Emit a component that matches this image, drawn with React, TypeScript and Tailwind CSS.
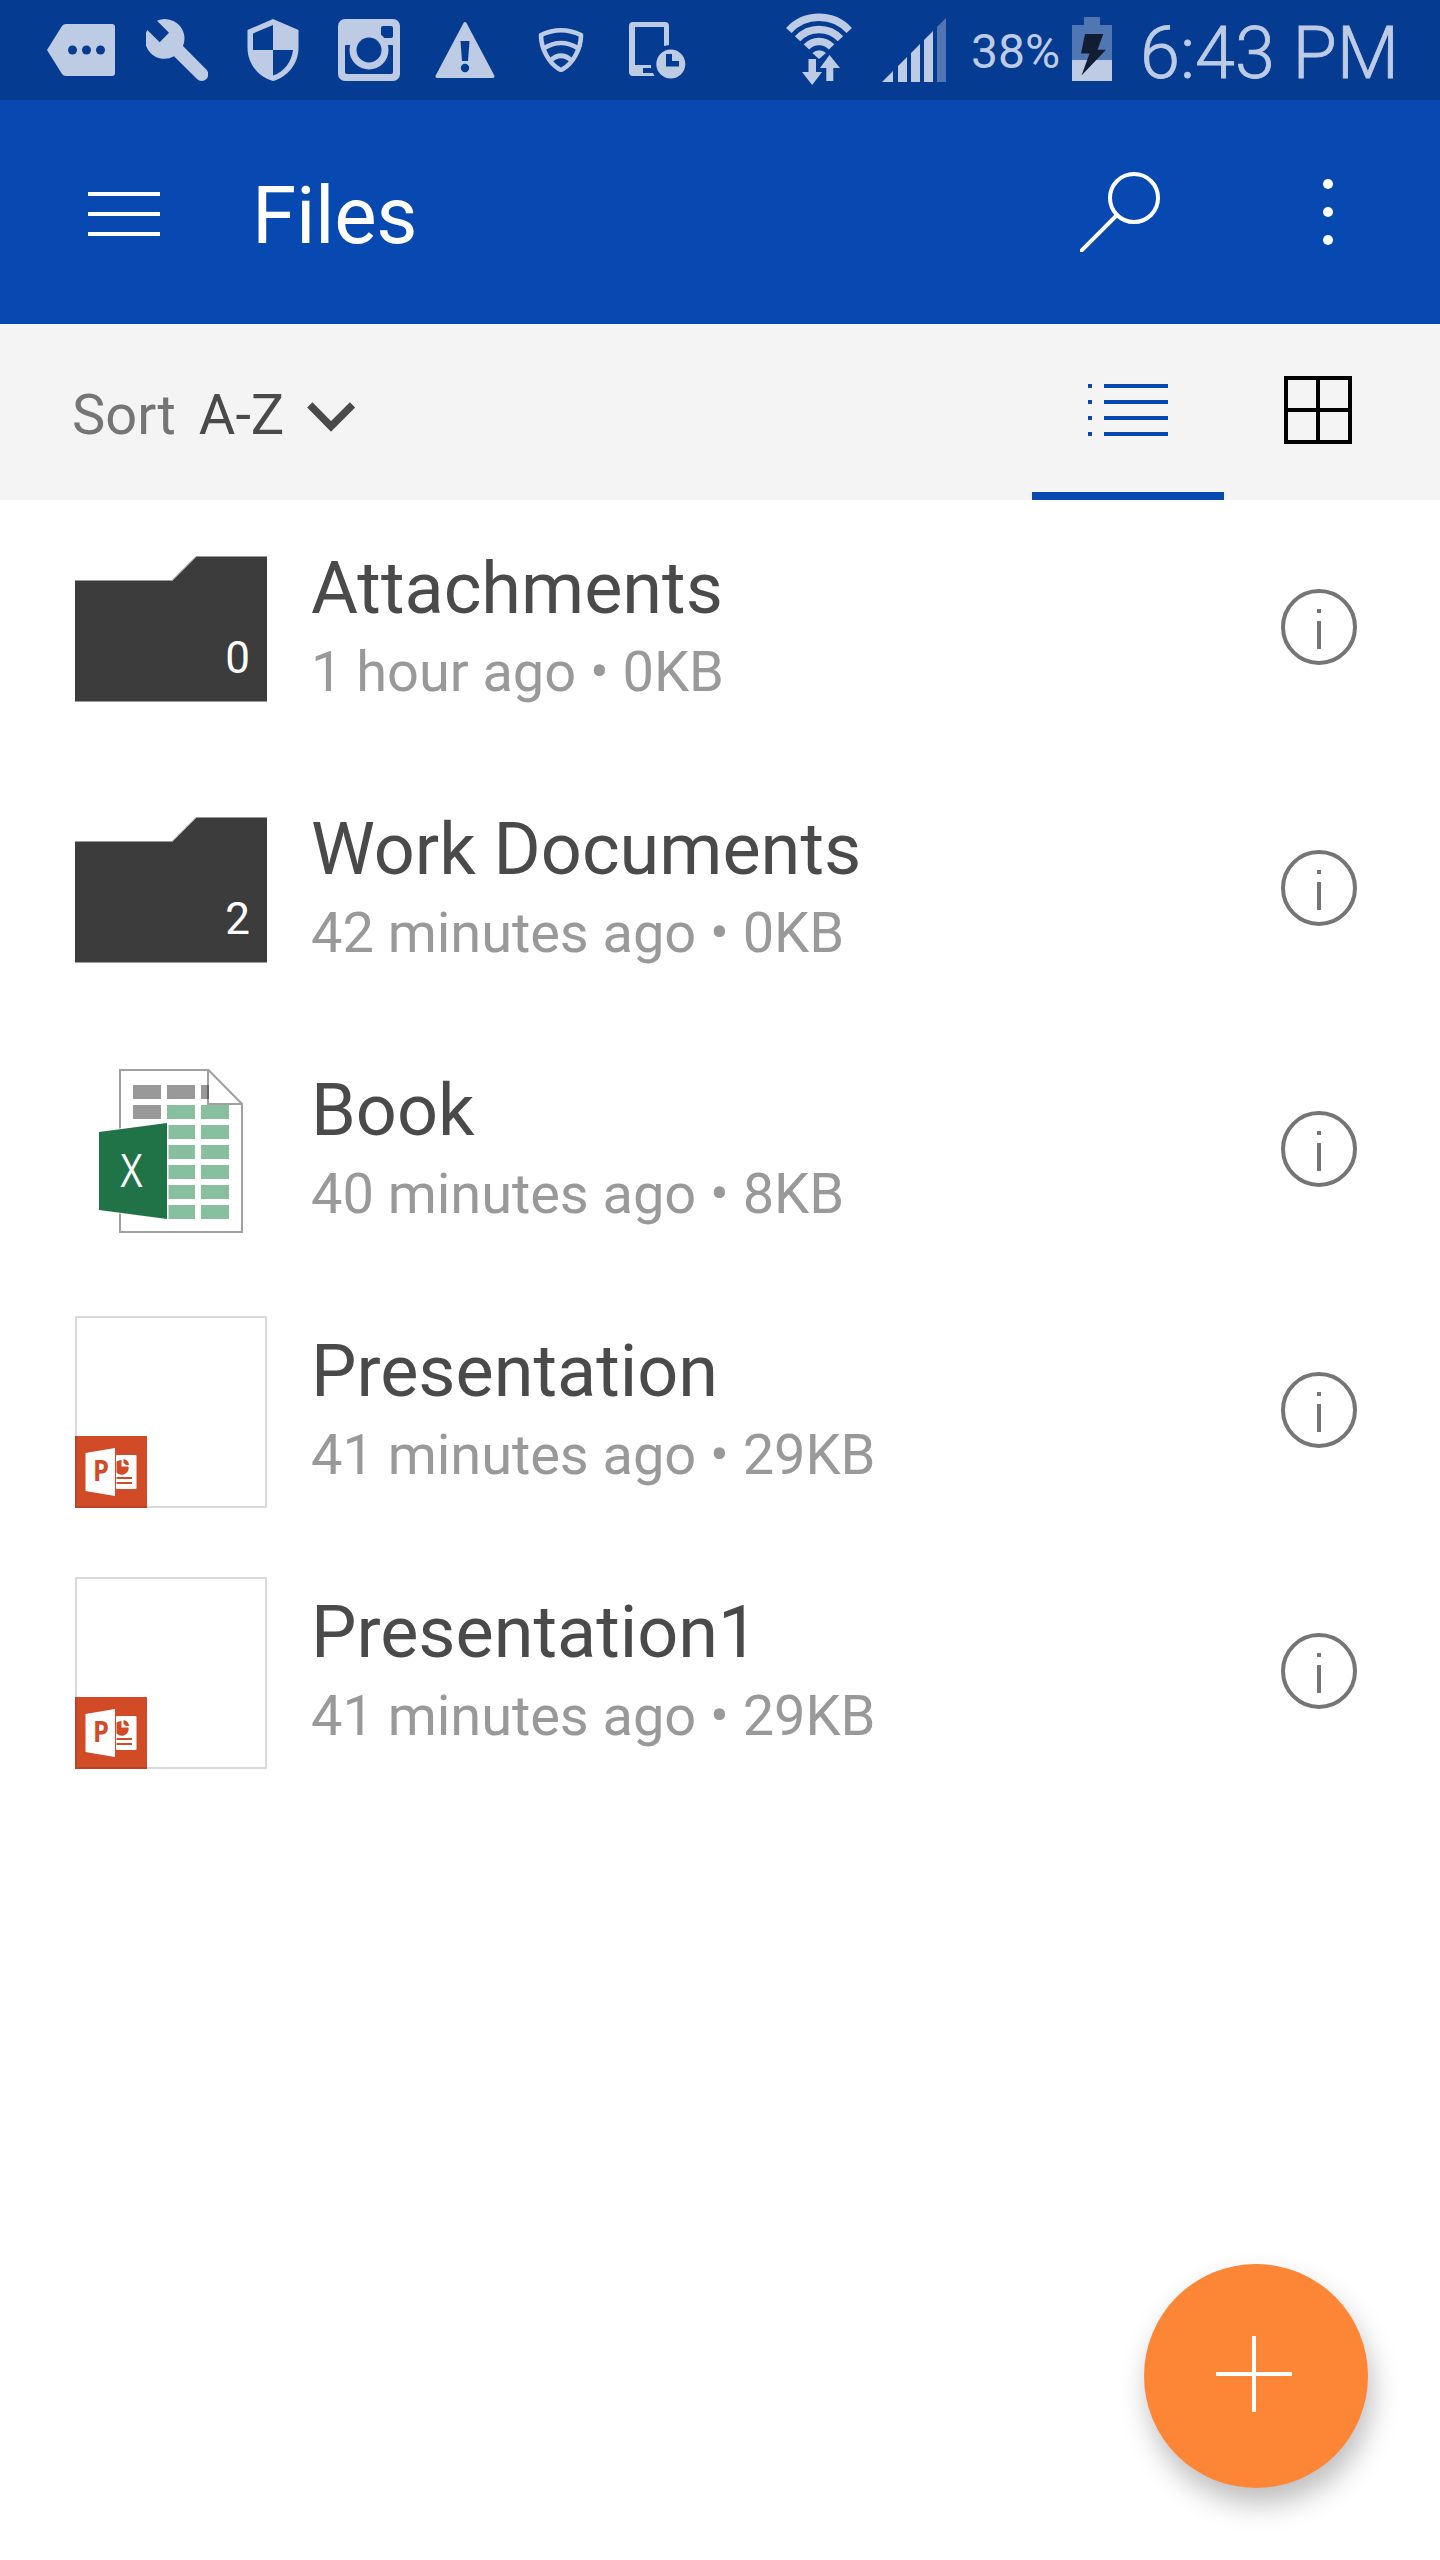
import React from "react";

const LIGHT = "#bdcbe4";
const DIM = "#5176b4";
const STATUS = "#053c91";

function StatusBar() {
  return (
    <div className="flex h-[100px] w-full shrink-0 bg-[#053c91] text-[#bdcbe4]">
      <svg className="ml-[47px] h-[100px] w-[68px] shrink-0" viewBox="47 0 68 100">
        <path d="M47 50 L62 26 Q63.500 24 66 24 H112 Q115 24 115 27 V73 Q115 76 112 76 H66 Q63.500 76 62 74 Z" fill={LIGHT} />
        <circle cx="72.500" cy="50" r="4.500" fill={STATUS} />
        <circle cx="86.500" cy="50" r="4.500" fill={STATUS} />
        <circle cx="100.500" cy="50" r="4.500" fill={STATUS} />
      </svg>
      <svg className="ml-[31px] h-[100px] w-[62px] shrink-0" viewBox="146 0 62 100">
        <path d="M157 20.800 A19.500 19.500 0 0 1 183 46 L206.300 69.500 A6.500 6.500 0 0 1 197 79 L174 56.300 A19.500 19.500 0 0 1 147.300 30 L159.700 42.300 L169 32.800 Z" fill={LIGHT} />
      </svg>
      <svg className="ml-[39px] h-[100px] w-[52px] shrink-0" viewBox="247 0 52 100">
        <path d="M273 19 L298.500 30 V48 C298.500 63 288 77 273 81 C258 77 247.500 63 247.500 48 V30 Z" fill={LIGHT} />
        <path d="M253 33.500 L273 25 V50 H253 Z M273 50 H293 C291.500 62 284 72 273 75.500 Z" fill={STATUS} />
      </svg>
      <svg className="ml-[39px] h-[100px] w-[62px] shrink-0" viewBox="338 0 62 100">
        <rect x="338" y="19" width="62" height="62" rx="7" fill={LIGHT} />
        <rect x="381" y="26" width="12" height="12" rx="2" fill={STATUS} />
        <path d="M345 46 Q345 45 346 45 H392 Q393 45 393 46 V72 Q393 74 391 74 H347 Q345 74 345 72 Z" fill={STATUS} />
        <circle cx="369" cy="50" r="19.500" fill={LIGHT} />
        <circle cx="369" cy="50" r="12.500" fill={STATUS} />
      </svg>
      <svg className="ml-[35px] h-[100px] w-[60px] shrink-0" viewBox="435 0 60 100">
        <path d="M463.500 23 Q465 21 466.500 23 L494.300 75.500 Q495 78 492.500 78 H437.500 Q435 78 435.700 75.500 Z" fill={LIGHT} />
        <path d="M460.500 41 H469.500 L468 61 H462 Z" fill={STATUS} />
        <circle cx="465" cy="68" r="4.200" fill={STATUS} />
      </svg>
      <svg className="ml-[43px] h-[100px] w-[46px] shrink-0" viewBox="538 0 46 100" fill="none" stroke={LIGHT} strokeWidth="4.600">
        <path d="M541 35 Q561 25.500 581 35 C581 49 573 63 563 69 Q561 70.500 559 69 C549 63 541 49 541 35 Z" strokeLinejoin="round" />
        <path d="M543.500 48.500 Q561 37.500 578.500 48.500" />
        <path d="M550.500 60.500 Q561 51 571.500 60.500" />
      </svg>
      <svg className="ml-[45px] h-[100px] w-[57px] shrink-0" viewBox="629 0 57 100">
        <path d="M633 22 H665 Q669 22 669 26 V45 L664 46 V27 H635 V65 H651 V68 H643 V73 H653 L654.500 76 H633 Q629 76 629 72 V26 Q629 22 633 22 Z" fill={LIGHT} />
        <circle cx="670.800" cy="64" r="14.500" fill={LIGHT} />
        <path d="M666 54 H672 V61 H679 V66.500 H666 Z" fill={STATUS} />
      </svg>
      <svg className="ml-[100px] h-[100px] w-[66px] shrink-0" viewBox="786 0 66 100">
        <g fill="none" stroke={LIGHT} strokeWidth="7.500">
          <path d="M788.800 30.500 A41.300 41.300 0 0 1 849.200 30.500" />
          <path d="M797.600 38.700 A29.300 29.300 0 0 1 840.400 38.700" />
          <path d="M806.400 46.900 A17.300 17.300 0 0 1 831.600 46.900" />
        </g>
        <path d="M819 59 L812.400 53 A9.500 9.500 0 0 1 826 53 Z" fill={LIGHT} />
        <path d="M808.500 59 H816 V72 H822 L812.200 85 L802 72 H808.500 Z M829.500 55 L840 68 H833.300 V81 H826.300 V68 H820 Z" fill={LIGHT} />
      </svg>
      <svg className="ml-[30px] h-[100px] w-[64px] shrink-0" viewBox="882 0 64 100">
        <path d="M882 82 L893 71 V82 Z M898 82 V66 L907 57 V82 Z M911 82 V53 L920 44 V82 Z M924 82 V40 L933 31 V82 Z" fill={LIGHT} />
        <path d="M937 82 V27 L946 18 V82 Z" fill={DIM} />
      </svg>
      <span className="ml-[25px] w-[90px] shrink-0 pt-[24px] text-[48px] leading-[56px] whitespace-nowrap">38%</span>
      <svg className="ml-[11px] h-[100px] w-[40px] shrink-0" viewBox="1072 0 40 100">
        <path d="M1084 17 H1100 V25 H1112 V60 H1072 V25 H1084 Z" fill={DIM} />
        <rect x="1072" y="60" width="40" height="21" fill={LIGHT} />
        <path d="M1085 34 H1103.300 L1097.500 49.700 H1106 L1081.500 75.500 L1089.500 53.500 H1081 Z" fill="#111d33" />
      </svg>
      <span className="ml-[28px] shrink-0 pt-[12px] text-[72px] leading-[84px] font-light whitespace-nowrap [-webkit-text-stroke:0.8px_#bdcbe4]">6:43 PM</span>
    </div>
  );
}

function Header() {
  return (
    <header className="flex h-[224px] w-full shrink-0 items-start bg-[#0849b1] text-white">
      <button className="mt-[92px] ml-[88px] flex w-[72px] flex-col gap-4">
        <span className="h-1 w-full bg-white" />
        <span className="h-1 w-full bg-white" />
        <span className="h-1 w-full bg-white" />
      </button>
      <h1 className="mt-[69px] ml-[92px] grow text-[80px] leading-[94px] tracking-[-0.3px]">Files</h1>
      <svg className="mt-[72px] h-[80px] w-[80px]" viewBox="1080 172 80 80" fill="none" stroke="white" strokeWidth="4">
        <circle cx="1134" cy="198" r="24" />
        <path d="M1117 215 L1081.700 250.300" strokeLinecap="round" />
      </svg>
      <div className="mt-[79px] mr-[107px] ml-[163px] flex flex-col gap-[18px]">
        <span className="size-[10px] rounded-full bg-white" />
        <span className="size-[10px] rounded-full bg-white" />
        <span className="size-[10px] rounded-full bg-white" />
      </div>
    </header>
  );
}

function Toolbar() {
  return (
    <div className="flex h-[176px] w-full shrink-0 items-start bg-[#f4f4f4] text-[56px] leading-[66px]">
      <span className="mt-[58px] ml-[72px] text-[#757575]">Sort</span>
      <span className="mt-[58px] ml-[23px] text-[#4a4a4a]">A-Z</span>
      <svg className="mt-[76px] ml-[22px] h-[34px] w-[50px]" viewBox="306 400 50 34">
        <path d="M309.800 404.800 L331 426.400 L352.500 404.800" fill="none" stroke="#4a4a4a" strokeWidth="7.400" />
      </svg>
      <div className="mr-6 ml-auto flex h-full">
        <button className="flex h-full w-[192px] flex-col justify-between border-b-8 border-[#0849b1] pt-[60px]">
          <svg className="ml-14 h-[52px] w-20" viewBox="0 0 80 52" fill="#0849b1">
            {[0, 16, 32, 48].map((y) => (
              <g key={y}>
                <rect x="0" y={y} width="4" height="4" />
                <rect x="16" y={y} width="64" height="4" />
              </g>
            ))}
          </svg>
        </button>
        <button className="flex h-full w-[192px] pt-[52px] pl-[60px]">
          <svg className="size-[68px]" viewBox="0 0 68 68" fill="none" stroke="black" strokeWidth="4">
            <path d="M2 2 H66 V66 H2 Z M34 2 V66 M2 34 H66" />
          </svg>
        </button>
      </div>
    </div>
  );
}

function FolderThumb({ count }: { count: number }) {
  return (
    <div className="relative size-[192px]">
      <svg className="size-[192px]" viewBox="0 0 192 192">
        <path d="M0 48 H97 L121 24 H192 V168 H0 Z" fill="#3c3c3c" />
        <path d="M0 47.500 H97 L121 23.500 H192 M0 168.500 H192" fill="none" stroke="#9b9b9b" strokeWidth="1" />
      </svg>
      <span className="absolute right-[17px] bottom-[41px] text-[44px] leading-[52px] text-white">{count}</span>
    </div>
  );
}

function ExcelThumb() {
  const rows = [30, 50, 70, 90, 110, 130, 150];
  return (
    <svg className="size-[192px]" viewBox="0 0 192 192">
      <path d="M45 15 H133.500 L167 49 V177 H45 Z" fill="white" stroke="#a0a0a0" strokeWidth="2" />
      {rows.map((y, i) => (
        <g key={y}>
          {i < 2 && <rect x="58" y={y} width="28" height="14" fill="#999999" />}
          <rect x="92" y={y} width="28" height="14" fill={i === 0 ? "#999999" : "#87bf9f"} />
          <rect x="126" y={y} width={i === 0 ? 8 : 28} height="14" fill={i === 0 ? "#999999" : "#87bf9f"} />
        </g>
      ))}
      <path d="M133 15 V49 H167" fill="none" stroke="#a0a0a0" strokeWidth="2" />
      <rect x="132" y="30" width="2" height="14" fill="#666666" />
      <path d="M24 76 L93.500 67.500 V164.500 L24 156 Z" fill="white" />
      <path d="M24 77 L92 68 V164 L24 155 Z" fill="#207347" />
      <text x="45.500" y="132" fontSize="45.500" textLength="22" lengthAdjust="spacingAndGlyphs" fill="white" fontFamily="Open Sans, sans-serif">X</text>
    </svg>
  );
}

function PowerPointThumb() {
  return (
    <div className="flex size-[192px] items-end border-2 border-[#d9d9d9]">
      <svg className="-mb-0.5 -ml-0.5 size-[72px]" viewBox="0 0 72 72">
        <rect width="72" height="72" fill="#d04b26" />
        <path d="M0 0 H2 V70 H72 V72 H0 Z" fill="#b84423" />
        <rect x="41" y="19" width="20.500" height="34" rx="1" fill="white" />
        <path d="M10.500 17 L40 12 V60 L10.500 55 Z" fill="white" />
        <path d="M41.500 25.500 Q43.500 24 46.500 24 V30.500 H53.500 A7 7 0 0 1 41.500 36.500 Z M48.500 23 A6.500 6.500 0 0 1 54 29 H51 L48.500 27 Z M41.500 41 H57 V43 H41.500 Z M41.500 46 H57 V48 H41.500 Z" fill="#d04b26" />
        <text x="18" y="45" fontSize="28" fontWeight="700" textLength="16" lengthAdjust="spacingAndGlyphs" fill="#d04b26" fontFamily="Open Sans, sans-serif">P</text>
      </svg>
    </div>
  );
}

function InfoIcon() {
  return (
    <svg className="mt-[56px] mr-[83px] size-[76px] shrink-0" viewBox="0 0 76 76">
      <circle cx="38" cy="38" r="36" fill="none" stroke="#757575" strokeWidth="4" />
      <path d="M36 20 H40 V24 H36 Z M36 32 H40 V60 H36 Z" fill="#757575" />
    </svg>
  );
}

const files: { name: string; meta: string; thumb: React.ReactNode }[] = [
  { name: "Attachments", meta: "1 hour ago • 0KB", thumb: <FolderThumb count={0} /> },
  { name: "Work Documents", meta: "42 minutes ago • 0KB", thumb: <FolderThumb count={2} /> },
  { name: "Book", meta: "40 minutes ago • 8KB", thumb: <ExcelThumb /> },
  { name: "Presentation", meta: "41 minutes ago • 29KB", thumb: <PowerPointThumb /> },
  { name: "Presentation1", meta: "41 minutes ago • 29KB", thumb: <PowerPointThumb /> },
];

export default function App() {
  return (
    <div className="relative flex h-[2560px] w-[1440px] flex-col overflow-hidden bg-white font-['Roboto',sans-serif]">
      <StatusBar />
      <Header />
      <Toolbar />
      <ul className="flex flex-col pt-[33px]">
        {files.map((f) => (
          <li key={f.name} className="flex h-[261px] items-start pl-[75px]">
            {f.thumb}
            <div className="ml-[44px] grow whitespace-nowrap">
              <p className="mt-[14px] text-[72px] leading-[84px] text-[#4a4a4a]">{f.name}</p>
              <p className="mt-[8px] text-[56px] leading-[66px] tracking-[-0.06px] text-[#999999]">{f.meta}</p>
            </div>
            <InfoIcon />
          </li>
        ))}
      </ul>
      <button className="absolute right-[72px] bottom-[72px] size-[224px] rounded-full bg-[#fd8536] shadow-[4px_16px_28px_rgba(0,0,0,0.26)]">
        <svg className="size-[224px]" viewBox="0 0 224 224">
          <path d="M72 110 H148 M110 72 V148" stroke="white" strokeWidth="4" />
        </svg>
      </button>
    </div>
  );
}
